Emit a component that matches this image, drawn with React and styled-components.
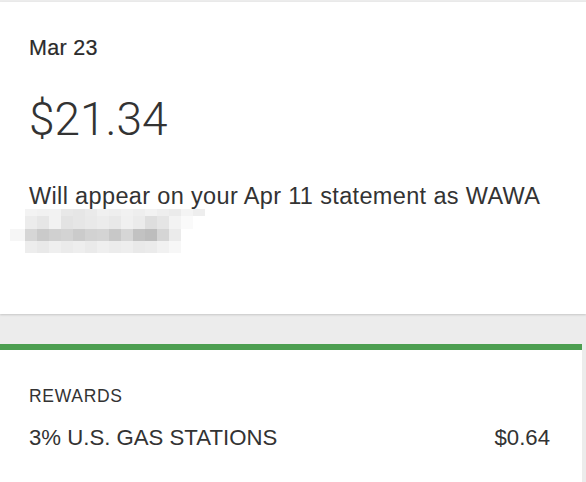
import styled, { createGlobalStyle } from "styled-components";

const GlobalStyle = createGlobalStyle`
  html, body {
    margin: 0;
    padding: 0;
    background: #ececec;
  }
  body {
    font-family: "Liberation Sans", Arial, sans-serif;
    color: #333;
  }
`;

const Page = styled.div`
  width: 586px;
  height: 482px;
  overflow: hidden;
  display: flex;
  flex-direction: column;
  padding-top: 2px;
  box-sizing: border-box;
`;

const TransactionCard = styled.div`
  height: 312px;
  box-sizing: border-box;
  background: #fff;
  padding: 35px 29px 0;
  box-shadow: 0 1px 2px rgba(0, 0, 0, 0.16);
  display: flex;
  flex-direction: column;
`;

const DateText = styled.div`
  font-size: 21.5px;
  line-height: 22px;
  letter-spacing: 0.3px;
  color: #2b2b2b;
  -webkit-text-stroke: 0.2px #2b2b2b;
`;

const Amount = styled.div`
  margin-top: 33px;
  font-family: Roboto, "Liberation Sans", sans-serif;
  font-weight: 300;
  font-size: 46px;
  line-height: 54px;
  color: #333;
`;

const Statement = styled.div`
  margin-top: 37px;
  font-size: 23.5px;
  line-height: 26px;
  letter-spacing: 0.35px;
  color: #333;
`;

const Redacted = styled.svg`
  display: block;
  margin-left: -19px;
`;

const Gap = styled.div`
  height: 30px;
  flex-shrink: 0;
`;

const RewardsCard = styled.div`
  flex: 1;
  width: 582px;
  box-sizing: border-box;
  background: #fff;
  border-top: 6px solid #4c9e50;
  padding: 36px 32px 0 29px;
`;

const Label = styled.div`
  font-size: 17.5px;
  line-height: 20px;
  letter-spacing: 0.7px;
  color: #333;
`;

const RewardRow = styled.div`
  margin-top: 19px;
  display: flex;
  justify-content: space-between;
  font-size: 22.2px;
  line-height: 26px;
  color: #333;
`;

// mosaic of the blurred merchant line
const mosaic = [
  { y: 0, h: 7, x: 15, cells: ["#f3f3f3", "#f1f1f1", "#f2f2f2", "#e8e8e8", "#e6e6e6", "#eaeaea", "#f0f0f0", "#eeeeee", "#f1f1f1", "#eeeeee", "#f2f2f2", "#eeeeee", "#ebebeb", "#f4f4f4", "#eeeeee"] },
  { y: 7, h: 13, x: 15, cells: ["#ececec", "#e6e6e6", "#f2f2f2", "#e3e3e3", "#e6e6e6", "#e9e9e9", "#ececec", "#e8e8e8", "#f0f0f0", "#ebebeb", "#dedede", "#e5e5e5", "#f3f3f3", "#fafafa"] },
  { y: 20, h: 12, x: 15, cells: ["#d6d6d6", "#cacaca", "#d0d0d0", "#d3d3d3", "#cbcbcb", "#d2d2d2", "#d4d4d4", "#c8c8c8", "#d6d6d6", "#c2c2c2", "#bdbdbd", "#d5d5d5", "#ebebeb"] },
  { y: 32, h: 12, x: 15, cells: ["#ededed", "#e9e9e9", "#efefef", "#ebebeb", "#eeeeee", "#eaeaea", "#efefef", "#ececec", "#eeeeee", "#e9e9e9", "#ebebeb", "#f1f1f1", "#f7f7f7"] },
];

const App = () => {
  return (
    <>
      <GlobalStyle />
      <Page>
        <TransactionCard>
          <DateText>Mar 23</DateText>
          <Amount>$21.34</Amount>
          <Statement>Will appear on your Apr 11 statement as WAWA</Statement>
          <Redacted width="200" height="46" viewBox="0 0 200 46">
            <rect x="0" y="20" width="15" height="12" fill="#f6f6f6" />
            {mosaic.map((row, r) =>
              row.cells.map((c, i) => (
                <rect key={r + "-" + i} x={row.x + i * 12} y={row.y} width="12" height={row.h} fill={c} />
              ))
            )}
          </Redacted>
        </TransactionCard>
        <Gap />
        <RewardsCard>
          <Label>REWARDS</Label>
          <RewardRow>
            <span>3% U.S. GAS STATIONS</span>
            <span>$0.64</span>
          </RewardRow>
        </RewardsCard>
      </Page>
    </>
  );
};

export default App;
